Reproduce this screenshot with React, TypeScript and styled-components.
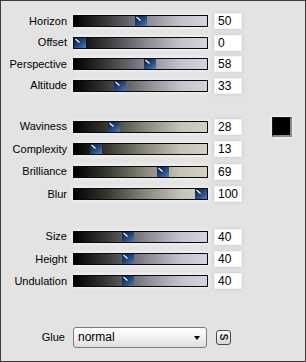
import * as React from 'react'
import styled, { createGlobalStyle } from 'styled-components'

const GlobalStyle = createGlobalStyle`
  html, body {
    margin: 0;
    padding: 0;
    background: #e3e3e3;
  }
  body {
    font-family: "Liberation Sans", Arial, sans-serif;
  }
`

interface SliderSpec {
  label: string
  value: number
}

type Tone = 'blue' | 'khaki'

const groups: { tone: Tone; rowH: number; top: number; items: SliderSpec[] }[] = [
  {
    tone: 'blue',
    rowH: 21.5,
    top: 9.25,
    items: [
      { label: 'Horizon', value: 50 },
      { label: 'Offset', value: 0 },
      { label: 'Perspective', value: 58 },
      { label: 'Altitude', value: 33 }
    ]
  },
  {
    tone: 'khaki',
    rowH: 22.5,
    top: 19,
    items: [
      { label: 'Waviness', value: 28 },
      { label: 'Complexity', value: 13 },
      { label: 'Brilliance', value: 69 },
      { label: 'Blur', value: 100 }
    ]
  },
  {
    tone: 'blue',
    rowH: 22.25,
    top: 20.5,
    items: [
      { label: 'Size', value: 40 },
      { label: 'Height', value: 40 },
      { label: 'Undulation', value: 40 }
    ]
  }
]

const TRACK_W = 135
const THUMB_W = 12

const Thumb = () => (
  <svg width={THUMB_W} height={10} viewBox="0 0 12 10">
    <defs>
      <linearGradient id="thumbFill" x1="0" y1="0" x2="1" y2="1">
        <stop offset="0" stopColor="#0f1c36" />
        <stop offset="0.55" stopColor="#27497e" />
        <stop offset="1" stopColor="#4d7fc4" />
      </linearGradient>
    </defs>
    <rect x="0" y="0" width="12" height="10" fill="url(#thumbFill)" />
    <path d="M1.5 1 L5.5 4.5" stroke="#ffffff" strokeWidth="1.1" />
  </svg>
)

export default function App() {
  return (
    <>
      <GlobalStyle />
      <Panel>
        {groups.map((g, gi) => (
          <Group key={gi} $top={g.top}>
            {g.items.map((item) => (
              <Row key={item.label} $h={g.rowH}>
                <Label>{item.label}</Label>
                <Track $tone={g.tone}>
                  <ThumbWrap
                    style={{ left: (item.value / 100) * (TRACK_W - 2 - THUMB_W) }}
                  >
                    <Thumb />
                  </ThumbWrap>
                </Track>
                <ValueBox>{item.value}</ValueBox>
                {item.label === 'Waviness' && <Swatch />}
              </Row>
            ))}
          </Group>
        ))}
        <GlueRow>
          <Label>Glue</Label>
          <Select>
            <span>normal</span>
            <Arrow />
          </Select>
          <SmallButton>
            <span>S</span>
          </SmallButton>
        </GlueRow>
      </Panel>
    </>
  )
}

const Panel = styled.div`
  box-sizing: border-box;
  width: 306px;
  height: 362px;
  border: 1px solid #3c3c3c;
  background: #e3e3e3;
  display: flex;
  flex-direction: column;
`

const Group = styled.div<{ $top: number }>`
  margin-top: ${(p) => p.$top}px;
  display: flex;
  flex-direction: column;
`

const Row = styled.div<{ $h: number }>`
  height: ${(p) => p.$h}px;
  display: grid;
  grid-template-columns: 66px 135px 28px 20px;
  column-gap: 6px;
  align-items: center;
  & > :nth-child(4) {
    margin-left: 24px;
  }
`

const Label = styled.div`
  font-size: 11px;
  color: #000;
  text-align: right;
  white-space: nowrap;
  line-height: 13px;
`

const Track = styled.div<{ $tone: Tone }>`
  position: relative;
  box-sizing: border-box;
  width: ${TRACK_W}px;
  height: 12px;
  border: 1px solid #0a0a0a;
  box-shadow: 0 0 5px rgba(255, 255, 255, 0.9);
  background: ${(p) =>
    p.$tone === 'blue'
      ? 'linear-gradient(to right, #000 0%, #3a3a3e 25%, #8a8b93 55%, #c2c3cd 80%, #d3d4de 100%)'
      : 'linear-gradient(to right, #000 0%, #38382f 25%, #8c8b7d 55%, #c4c3b5 80%, #d2d1c3 100%)'};
`

const ThumbWrap = styled.div`
  position: absolute;
  top: 0;
  height: 10px;
  line-height: 0;
`

const ValueBox = styled.div`
  box-sizing: border-box;
  width: 28px;
  height: 16px;
  background: #fff;
  border: 1px solid #f4f4f4;
  box-shadow: 0 0 4px rgba(0, 0, 0, 0.12);
  font-size: 12px;
  line-height: 14px;
  padding-left: 3px;
  color: #000;
`

const Swatch = styled.div`
  box-sizing: border-box;
  width: 20px;
  height: 20px;
  background: #000;
  border-top: 1px solid #1a1a1a;
  border-left: 1px solid #1a1a1a;
  border-right: 2px solid #8a8a8a;
  border-bottom: 2px solid #8a8a8a;
  box-shadow: 0 0 4px rgba(255, 255, 255, 0.9);
`

const GlueRow = styled.div`
  margin-top: 34px;
  height: 21px;
  display: grid;
  grid-template-columns: 64px 134px 15px;
  column-gap: 8px;
  align-items: center;
  & > :nth-child(3) {
    margin-left: 1px;
  }
`

const Select = styled.div`
  box-sizing: border-box;
  height: 21px;
  border: 1px solid #7c7c7c;
  border-radius: 3px;
  background: linear-gradient(to bottom, #ffffff 0%, #f1f1f1 50%, #dedede 100%);
  display: flex;
  align-items: center;
  justify-content: space-between;
  padding: 0 6px 0 4px;
  font-size: 12px;
  color: #000;
`

const Arrow = styled.div`
  width: 0;
  height: 0;
  border-left: 3.5px solid transparent;
  border-right: 3.5px solid transparent;
  border-top: 4px solid #000;
  margin-top: 1px;
`

const SmallButton = styled.div`
  box-sizing: border-box;
  width: 15px;
  height: 15px;
  border: 1px solid #4a4a4a;
  border-radius: 3px;
  background: linear-gradient(to bottom, #fafafa, #d8d8d8);
  display: flex;
  align-items: center;
  justify-content: center;
  font-size: 10px;
  font-weight: bold;
  color: #222;
  span {
    display: block;
    transform: rotate(90deg);
    line-height: 10px;
  }
`
